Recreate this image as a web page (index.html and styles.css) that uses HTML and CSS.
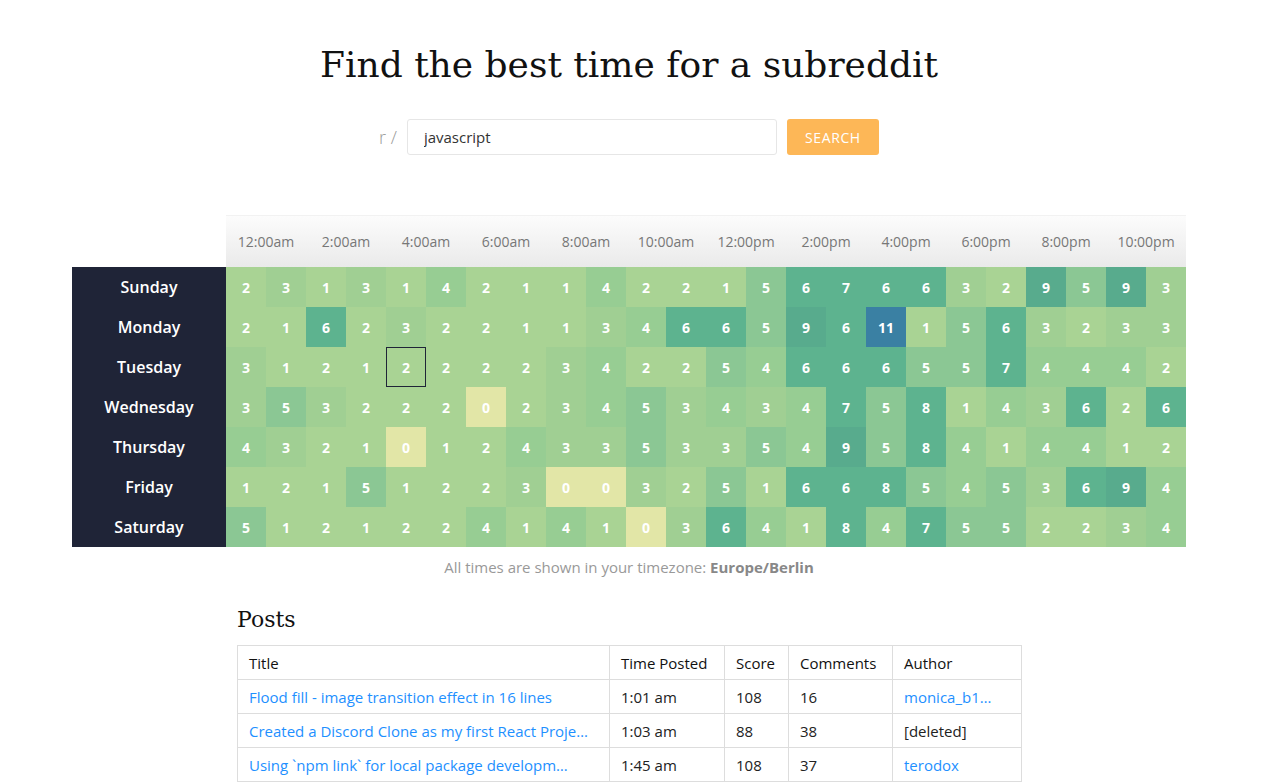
FILE: index.html
```html
<!DOCTYPE html>
<html lang="en">
<head>
<meta charset="utf-8">
<title>Find the best time for a subreddit</title>
<link rel="stylesheet" href="styles.css">
</head>
<body>
<main class="page">
  <h1 class="title">Find the best time for a subreddit</h1>
  <form class="search">
    <span class="search-prefix">r /</span>
    <input class="search-input" type="text" value="javascript">
    <button class="search-btn" type="button">Search</button>
  </form>

  <section class="heatmap">
    <div class="hm-head">
      <div class="hm-corner"></div>
      <div class="hm-hours">
        <span>12:00am</span><span>2:00am</span><span>4:00am</span><span>6:00am</span><span>8:00am</span><span>10:00am</span><span>12:00pm</span><span>2:00pm</span><span>4:00pm</span><span>6:00pm</span><span>8:00pm</span><span>10:00pm</span>
      </div>
    </div>
    <div class="hm-body">
      <div class="hm-days">
        <div class="hm-day">Sunday</div>
        <div class="hm-day">Monday</div>
        <div class="hm-day">Tuesday</div>
        <div class="hm-day">Wednesday</div>
        <div class="hm-day">Thursday</div>
        <div class="hm-day">Friday</div>
        <div class="hm-day">Saturday</div>
      </div>
      <div class="hm-grid">
        <div class="c v2">2</div><div class="c v3">3</div><div class="c v1">1</div><div class="c v3">3</div><div class="c v1">1</div><div class="c v4">4</div><div class="c v2">2</div><div class="c v1">1</div><div class="c v1">1</div><div class="c v4">4</div><div class="c v2">2</div><div class="c v2">2</div><div class="c v1">1</div><div class="c v5">5</div><div class="c v6">6</div><div class="c v7">7</div><div class="c v6">6</div><div class="c v6">6</div><div class="c v3">3</div><div class="c v2">2</div><div class="c v9">9</div><div class="c v5">5</div><div class="c v9">9</div><div class="c v3">3</div>
        <div class="c v2">2</div><div class="c v1">1</div><div class="c v6">6</div><div class="c v2">2</div><div class="c v3">3</div><div class="c v2">2</div><div class="c v2">2</div><div class="c v1">1</div><div class="c v1">1</div><div class="c v3">3</div><div class="c v4">4</div><div class="c v6">6</div><div class="c v6">6</div><div class="c v5">5</div><div class="c v9">9</div><div class="c v6">6</div><div class="c v11">11</div><div class="c v1">1</div><div class="c v5">5</div><div class="c v6">6</div><div class="c v3">3</div><div class="c v2">2</div><div class="c v3">3</div><div class="c v3">3</div>
        <div class="c v3">3</div><div class="c v1">1</div><div class="c v2">2</div><div class="c v1">1</div><div class="c v2 c-selected">2</div><div class="c v2">2</div><div class="c v2">2</div><div class="c v2">2</div><div class="c v3">3</div><div class="c v4">4</div><div class="c v2">2</div><div class="c v2">2</div><div class="c v5">5</div><div class="c v4">4</div><div class="c v6">6</div><div class="c v6">6</div><div class="c v6">6</div><div class="c v5">5</div><div class="c v5">5</div><div class="c v7">7</div><div class="c v4">4</div><div class="c v4">4</div><div class="c v4">4</div><div class="c v2">2</div>
        <div class="c v3">3</div><div class="c v5">5</div><div class="c v3">3</div><div class="c v2">2</div><div class="c v2">2</div><div class="c v2">2</div><div class="c v0">0</div><div class="c v2">2</div><div class="c v3">3</div><div class="c v4">4</div><div class="c v5">5</div><div class="c v3">3</div><div class="c v4">4</div><div class="c v3">3</div><div class="c v4">4</div><div class="c v7">7</div><div class="c v5">5</div><div class="c v8">8</div><div class="c v1">1</div><div class="c v4">4</div><div class="c v3">3</div><div class="c v6">6</div><div class="c v2">2</div><div class="c v6">6</div>
        <div class="c v4">4</div><div class="c v3">3</div><div class="c v2">2</div><div class="c v1">1</div><div class="c v0">0</div><div class="c v1">1</div><div class="c v2">2</div><div class="c v4">4</div><div class="c v3">3</div><div class="c v3">3</div><div class="c v5">5</div><div class="c v3">3</div><div class="c v3">3</div><div class="c v5">5</div><div class="c v4">4</div><div class="c v9">9</div><div class="c v5">5</div><div class="c v8">8</div><div class="c v4">4</div><div class="c v1">1</div><div class="c v4">4</div><div class="c v4">4</div><div class="c v1">1</div><div class="c v2">2</div>
        <div class="c v1">1</div><div class="c v2">2</div><div class="c v1">1</div><div class="c v5">5</div><div class="c v1">1</div><div class="c v2">2</div><div class="c v2">2</div><div class="c v3">3</div><div class="c v0">0</div><div class="c v0">0</div><div class="c v3">3</div><div class="c v2">2</div><div class="c v5">5</div><div class="c v1">1</div><div class="c v6">6</div><div class="c v6">6</div><div class="c v8">8</div><div class="c v5">5</div><div class="c v4">4</div><div class="c v5">5</div><div class="c v3">3</div><div class="c v6">6</div><div class="c v9">9</div><div class="c v4">4</div>
        <div class="c v5">5</div><div class="c v1">1</div><div class="c v2">2</div><div class="c v1">1</div><div class="c v2">2</div><div class="c v2">2</div><div class="c v4">4</div><div class="c v1">1</div><div class="c v4">4</div><div class="c v1">1</div><div class="c v0">0</div><div class="c v3">3</div><div class="c v6">6</div><div class="c v4">4</div><div class="c v1">1</div><div class="c v8">8</div><div class="c v4">4</div><div class="c v7">7</div><div class="c v5">5</div><div class="c v5">5</div><div class="c v2">2</div><div class="c v2">2</div><div class="c v3">3</div><div class="c v4">4</div>
      </div>
    </div>
  </section>

  <p class="tz">All times are shown in your timezone: <strong>Europe/Berlin</strong></p>

  <section class="posts">
    <h2 class="posts-title">Posts</h2>
    <table class="posts-table">
      <thead>
        <tr><th class="col-title">Title</th><th class="col-time">Time Posted</th><th class="col-score">Score</th><th class="col-comments">Comments</th><th class="col-author">Author</th></tr>
      </thead>
      <tbody>
        <tr><td><a href="#">Flood fill - image transition effect in 16 lines</a></td><td>1:01 am</td><td>108</td><td>16</td><td><a href="#">monica_b1…</a></td></tr>
        <tr><td><a href="#">Created a Discord Clone as my first React Proje…</a></td><td>1:03 am</td><td>88</td><td>38</td><td>[deleted]</td></tr>
        <tr><td><a href="#">Using `npm link` for local package developm…</a></td><td>1:45 am</td><td>108</td><td>37</td><td><a href="#">terodox</a></td></tr>
      </tbody>
    </table>
  </section>
</main>
</body>
</html>
```
FILE: styles.css
```css
* { box-sizing: border-box; }

html, body {
  margin: 0;
  background: #fff;
}

body {
  padding: 0 5px 0 0;
  font-family: "Open Sans", "DejaVu Sans", sans-serif;
  color: #222;
}

.page {
  width: 1114px;
  margin: 0 auto;
  padding-top: 40px;
}

.title {
  margin: 0;
  text-align: center;
  font-family: "DejaVu Serif", serif;
  font-weight: 400;
  font-size: 36px;
  line-height: 50px;
  color: #111;
}

.search {
  display: flex;
  justify-content: center;
  align-items: center;
  gap: 10px;
  margin: 29px 0 0;
}

.search-prefix {
  font-size: 18px;
  font-weight: 300;
  color: #999;
}

.search-input {
  width: 370px;
  height: 36px;
  border: 1px solid #e6e6e6;
  border-radius: 3px;
  padding: 0 16px;
  font-family: inherit;
  font-size: 15px;
  color: #333;
  outline: none;
}

.search-btn {
  width: 92px;
  height: 36px;
  border: 0;
  border-radius: 3px;
  background: #fdb757;
  color: #fff;
  font-family: inherit;
  font-size: 14px;
  text-transform: uppercase;
  letter-spacing: 0.6px;
}

/* Heatmap */
.heatmap {
  margin-top: 60px;
}

.hm-head {
  display: flex;
}

.hm-corner {
  width: 154px;
}

.hm-hours {
  display: grid;
  grid-template-columns: repeat(12, 80px);
  height: 52px;
  background: linear-gradient(#fcfcfc, #eaeaea);
  border-top: 1px solid #f2f2f2;
}

.hm-hours span {
  display: flex;
  align-items: center;
  justify-content: center;
  font-size: 14px;
  color: #777;
}

.hm-body {
  display: flex;
}

.hm-days {
  width: 154px;
  background: #1f2437;
  display: grid;
  grid-template-rows: repeat(7, 40px);
}

.hm-day {
  display: flex;
  align-items: center;
  justify-content: center;
  color: #fff;
  font-size: 16px;
  font-weight: 600;
}

.hm-grid {
  display: grid;
  grid-template-columns: repeat(24, 40px);
  grid-template-rows: repeat(7, 40px);
}

.c {
  display: flex;
  align-items: center;
  justify-content: center;
  color: #fff;
  font-size: 14px;
  font-weight: 700;
}

.c-selected {
  border: 1px solid #1f2437;
}

.v0 { background: #e2e6a7; }
.v1 { background: #a9d394; }
.v2 { background: #a9d394; }
.v3 { background: #a0cf93; }
.v4 { background: #97cd93; }
.v5 { background: #8bc794; }
.v6 { background: #5db38f; }
.v7 { background: #5db38f; }
.v8 { background: #5db38f; }
.v9 { background: #58ab8d; }
.v11 { background: #3a80a3; }

.tz {
  margin: 10px 0 0;
  text-align: center;
  font-size: 15px;
  color: #999;
}

.tz strong {
  color: #888;
  font-weight: 700;
}

/* Posts */
.posts {
  width: 784px;
  margin: 29px auto 0;
}

.posts-title {
  margin: 0 0 11px;
  font-family: "DejaVu Serif", serif;
  font-weight: 400;
  font-size: 22px;
  line-height: 28px;
  color: #111;
}

.posts-table {
  width: 784px;
  border-collapse: collapse;
  table-layout: fixed;
  font-size: 15px;
}

.col-title { width: 372px; }
.col-time { width: 115px; }
.col-score { width: 64px; }
.col-comments { width: 104px; }
.col-author { width: 129px; }

.posts-table th,
.posts-table td {
  border: 1px solid #ddd;
  height: 34px;
  padding: 0 11px;
  text-align: left;
  white-space: nowrap;
  overflow: hidden;
  text-overflow: ellipsis;
  color: #222;
}

.posts-table th {
  font-weight: 400;
  color: #111;
}

.posts-table a {
  color: #1e90ff;
  text-decoration: none;
}
```
